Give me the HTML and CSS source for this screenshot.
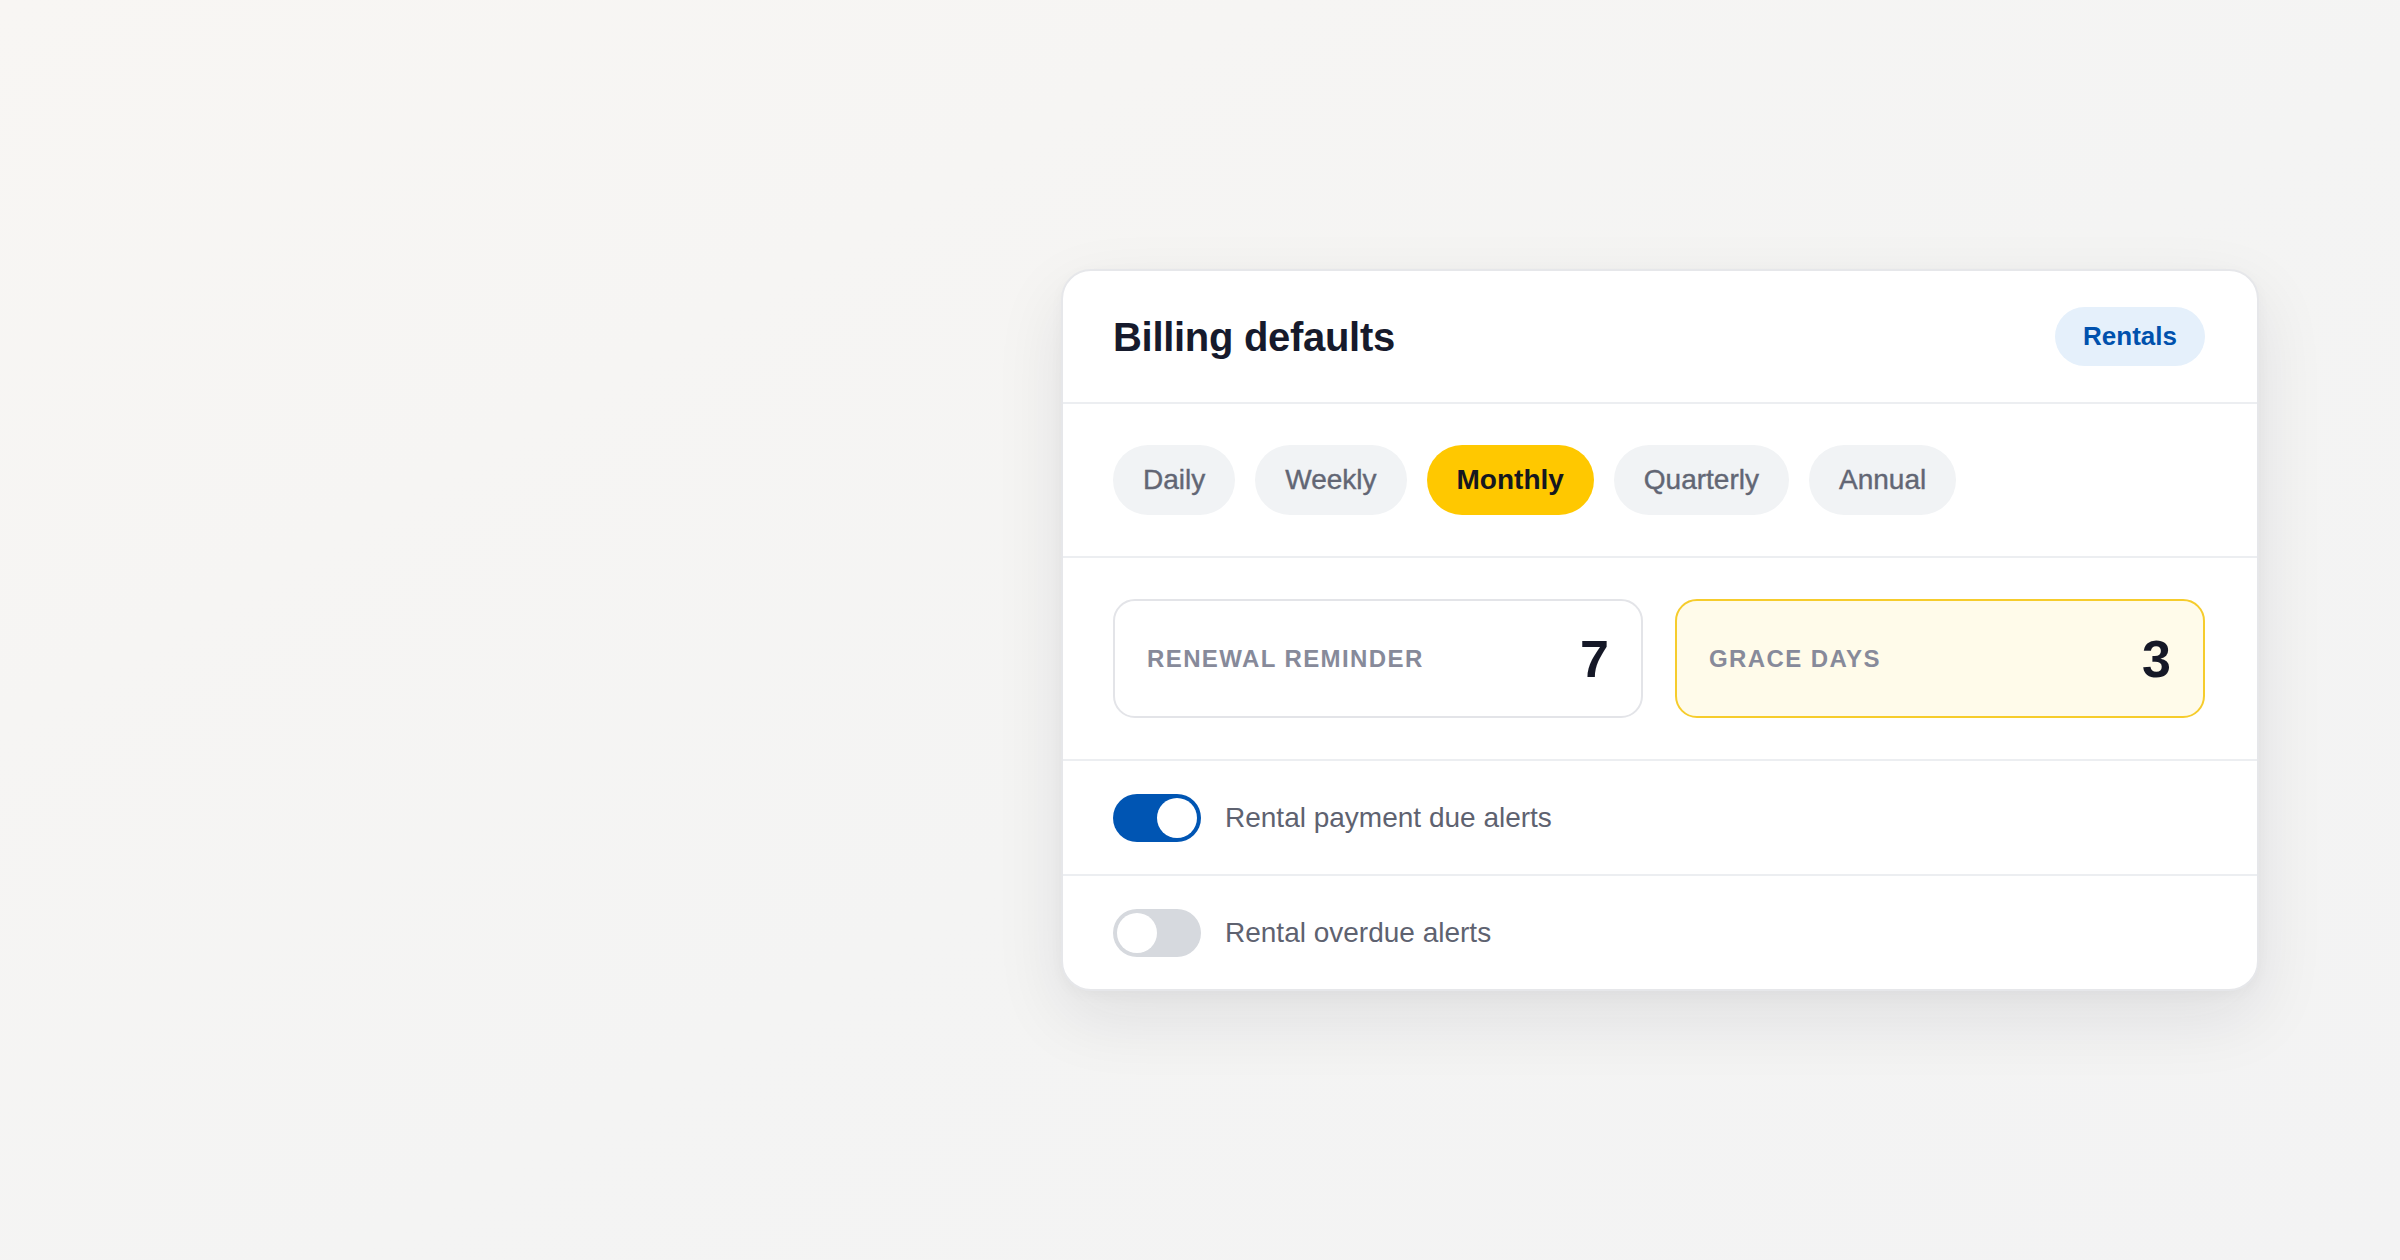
FILE: index.html
```html
<!DOCTYPE html>
<html lang="en">
<head>
<meta charset="utf-8">
<title>Billing defaults</title>
<link rel="stylesheet" href="styles.css">
</head>
<body>
<main class="stage">
  <section class="card">
    <header class="card-head">
      <h1 class="title">Billing defaults</h1>
      <span class="badge">Rentals</span>
    </header>
    <div class="section tabs">
      <button class="pill">Daily</button>
      <button class="pill">Weekly</button>
      <button class="pill pill-active">Monthly</button>
      <button class="pill">Quarterly</button>
      <button class="pill">Annual</button>
    </div>
    <div class="section stats">
      <div class="stat">
        <span class="stat-label">Renewal reminder</span>
        <span class="stat-value">7</span>
      </div>
      <div class="stat stat-hl">
        <span class="stat-label">Grace days</span>
        <span class="stat-value">3</span>
      </div>
    </div>
    <div class="row">
      <span class="toggle toggle-on"><span class="knob"></span></span>
      <span class="row-label">Rental payment due alerts</span>
    </div>
    <div class="row row-last">
      <span class="toggle"><span class="knob"></span></span>
      <span class="row-label">Rental overdue alerts</span>
    </div>
  </section>
</main>
</body>
</html>
```
FILE: styles.css
```css
* { box-sizing: border-box; }
html, body { margin: 0; padding: 0; }
body {
  width: 2400px;
  height: 1260px;
  background: linear-gradient(150deg, #f8f6f3 0%, #f4f4f3 55%, #f3f3f3 100%);
  font-family: "Liberation Sans", Arial, Helvetica, sans-serif;
  overflow: hidden;
}
.stage {
  height: 1260px;
  display: flex;
  align-items: center;
  justify-content: flex-end;
  padding-right: 141px;
}
.card {
  width: 1198px;
  background: #ffffff;
  border: 2px solid #e6e7ea;
  border-radius: 30px;
  box-shadow: 0 26px 70px rgba(20, 24, 40, 0.09), 0 4px 14px rgba(20, 24, 40, 0.03);
  overflow: hidden;
}
.card-head {
  display: flex;
  align-items: center;
  justify-content: space-between;
  padding: 36px 52px 36px 50px;
  border-bottom: 2px solid #eceef1;
}
.title {
  margin: 0;
  font-size: 40px;
  line-height: 48px;
  font-weight: 700;
  color: #161a2c;
  letter-spacing: -0.3px;
}
.badge {
  display: inline-flex;
  align-items: center;
  height: 59px;
  padding: 0 28px;
  border-radius: 30px;
  background: #e5f0fb;
  color: #0051ad;
  font-size: 26px;
  font-weight: 700;
}
.section {
  padding: 41px 50px;
  border-bottom: 2px solid #eceef1;
}
.tabs {
  display: flex;
  gap: 20px;
}
.pill {
  height: 70px;
  padding: 0 30px;
  border: none;
  border-radius: 35px;
  background: #f1f3f5;
  color: #626674;
  font-family: inherit;
  font-size: 28px;
  font-weight: 400;
  -webkit-text-stroke: 0.4px #626674;
}
.pill-active {
  background: #ffc800;
  color: #15171f;
  font-weight: 700;
  -webkit-text-stroke: 0;
}
.stats {
  display: grid;
  grid-template-columns: 1fr 1fr;
  gap: 32px;
  padding: 41px 52px 41px 50px;
}
.stat {
  height: 119px;
  display: flex;
  align-items: center;
  justify-content: space-between;
  padding: 0 32px;
  border: 2px solid #e3e4e8;
  border-radius: 22px;
  background: #ffffff;
}
.stat-hl {
  background: #fffbea;
  border-color: #f6cc2c;
}
.stat-label {
  text-transform: uppercase;
  font-size: 24px;
  font-weight: 700;
  letter-spacing: 1.4px;
  color: #878a9a;
}
.stat-value {
  font-size: 52px;
  line-height: 60px;
  font-weight: 700;
  color: #151827;
}
.row {
  display: flex;
  align-items: center;
  gap: 24px;
  padding: 33px 50px 32px;
  border-bottom: 2px solid #eceef1;
}
.row-last { border-bottom: none; }
.toggle {
  width: 88px;
  height: 48px;
  padding: 4px;
  border-radius: 24px;
  background: #d6d9de;
  display: flex;
  justify-content: flex-start;
}
.toggle-on {
  background: #0055b3;
  justify-content: flex-end;
}
.knob {
  width: 40px;
  height: 40px;
  border-radius: 50%;
  background: #ffffff;
}
.row-label {
  font-size: 28px;
  color: #5e6270;
  line-height: 40px;
}
```
